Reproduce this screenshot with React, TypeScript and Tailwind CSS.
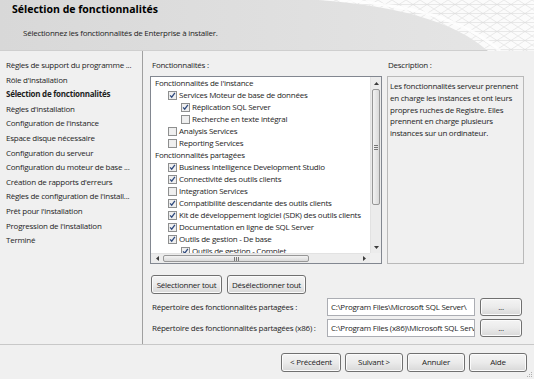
import React from "react";

const steps = [
  "Règles de support du programme ...",
  "Rôle d'installation",
  "Sélection de fonctionnalités",
  "Règles d'installation",
  "Configuration de l'instance",
  "Espace disque nécessaire",
  "Configuration du serveur",
  "Configuration du moteur de base ...",
  "Création de rapports d'erreurs",
  "Règles de configuration de l'install...",
  "Prêt pour l'installation",
  "Progression de l'installation",
  "Terminé",
];

type Feature = { label: string; level: 0 | 1 | 2; checked?: boolean };

const features: Feature[] = [
  { label: "Fonctionnalités de l'instance", level: 0 },
  { label: "Services Moteur de base de données", level: 1, checked: true },
  { label: "Réplication SQL Server", level: 2, checked: true },
  { label: "Recherche en texte intégral", level: 2, checked: false },
  { label: "Analysis Services", level: 1, checked: false },
  { label: "Reporting Services", level: 1, checked: false },
  { label: "Fonctionnalités partagées", level: 0 },
  { label: "Business Intelligence Development Studio", level: 1, checked: true },
  { label: "Connectivité des outils clients", level: 1, checked: true },
  { label: "Integration Services", level: 1, checked: false },
  { label: "Compatibilité descendante des outils clients", level: 1, checked: true },
  { label: "Kit de développement logiciel (SDK) des outils clients", level: 1, checked: true },
  { label: "Documentation en ligne de SQL Server", level: 1, checked: true },
  { label: "Outils de gestion - De base", level: 1, checked: true },
  { label: "Outils de gestion - Complet", level: 2, checked: true },
];

const description = [
  "Les fonctionnalités serveur prennent",
  "en charge les instances et ont leurs",
  "propres ruches de Registre. Elles",
  "prennent en charge plusieurs",
  "instances sur un ordinateur.",
];

function CheckBox({ checked }: { checked?: boolean }) {
  return (
    <svg width="9" height="9" viewBox="0 0 9 9" className="shrink-0">
      <rect x="0.5" y="0.5" width="8" height="8" fill="#f6f6f6" stroke="#8e8f8f" />
      <rect x="1.5" y="1.5" width="6" height="6" fill="#e4e4e4" />
      <rect x="2" y="2" width="5" height="5" fill="#f0f0f0" />
      {checked && (
        <path d="M2.1 4.4 L3.7 6.2 L6.9 1.9" fill="none" stroke="#2f4a7e" strokeWidth="1.3" />
      )}
    </svg>
  );
}

function WinButton({ children, className }: { children: React.ReactNode; className: string }) {
  return (
    <button
      className={
        "flex items-center justify-center whitespace-nowrap rounded-[3px] border border-[#707070] bg-linear-to-b from-[#f4f4f4] via-[#ebebeb] to-[#d8d8d8] text-[8px] text-[#1e1e1e] shadow-[inset_0_0_0_1px_#fbfbfb] " +
        className
      }
    >
      {children}
    </button>
  );
}

function VScroll() {
  return (
    <div className="flex w-[11px] flex-col border-l border-[#e2e2e2] bg-[#ececec]">
      <div className="flex h-[12px] items-center justify-center">
        <svg width="5" height="3" viewBox="0 0 5 3">
          <path d="M0 3 L2.5 0 L5 3 Z" fill="#3c3c3c" />
        </svg>
      </div>
      <div className="mx-[1px] flex h-[116px] items-center justify-center rounded-[2px] border border-[#979797] bg-linear-to-r from-[#f3f3f3] to-[#dadada]">
        <div className="flex flex-col gap-[1px]">
          <div className="h-px w-[4px] bg-[#777]" />
          <div className="h-px w-[4px] bg-[#777]" />
          <div className="h-px w-[4px] bg-[#777]" />
        </div>
      </div>
      <div className="flex-1" />
      <div className="flex h-[12px] items-center justify-center">
        <svg width="5" height="3" viewBox="0 0 5 3">
          <path d="M0 0 L2.5 3 L5 0 Z" fill="#3c3c3c" />
        </svg>
      </div>
    </div>
  );
}

function HScroll() {
  return (
    <div className="flex flex-1 items-stretch border-t border-[#e2e2e2] bg-[#ececec]">
      <div className="flex w-[12px] items-center justify-center">
        <svg width="3" height="5" viewBox="0 0 3 5">
          <path d="M3 0 L0 2.5 L3 5 Z" fill="#3c3c3c" />
        </svg>
      </div>
      <div className="my-[1px] flex w-[146px] items-center justify-center rounded-[2px] border border-[#979797] bg-linear-to-b from-[#f3f3f3] to-[#dadada]">
        <div className="flex gap-[1px]">
          <div className="h-[4px] w-px bg-[#777]" />
          <div className="h-[4px] w-px bg-[#777]" />
          <div className="h-[4px] w-px bg-[#777]" />
        </div>
      </div>
      <div className="flex-1" />
      <div className="flex w-[12px] items-center justify-center">
        <svg width="3" height="5" viewBox="0 0 3 5">
          <path d="M0 0 L3 2.5 L0 5 Z" fill="#3c3c3c" />
        </svg>
      </div>
    </div>
  );
}

function HeaderMesh() {
  return (
    <svg className="absolute inset-0" width="534" height="51" viewBox="0 0 534 51">
      <defs>
        <pattern id="mesh" width="14" height="9" patternUnits="userSpaceOnUse">
          <path d="M0 0 L14 9 M14 0 L0 9 M0 4.5 L14 4.5" stroke="#dcdcdc" strokeWidth="0.6" />
        </pattern>
        <clipPath id="swoosh">
          <path d="M318 0 C 400 6, 455 22, 488 51 L534 51 L534 0 Z" />
        </clipPath>
      </defs>
      <path d="M318 0 C 400 6, 455 22, 488 51 L534 51 L534 0 Z" fill="#ffffff" opacity="0.85" />
      <g clipPath="url(#swoosh)">
        <rect x="300" y="0" width="234" height="51" fill="url(#mesh)" />
      </g>
      <path d="M340 0 C 410 5, 462 18, 500 51" fill="none" stroke="#ffffff" strokeWidth="3" opacity="0.8" />
    </svg>
  );
}

export default function App() {
  return (
    <div className="flex h-[379px] w-[534px] flex-col overflow-hidden bg-[#f0f0f0] font-['Open_Sans','Liberation_Sans',sans-serif] text-[8px] tracking-[-0.25px] text-[#1e1e1e]">
      <div className="relative h-[51px] shrink-0 border-b border-[#cfcfcf] bg-linear-to-r from-[#d8d8d8] to-[#e6e6e6]">
        <HeaderMesh />
        <div className="relative pl-[12px] pt-[2px]">
          <div className="text-[10.5px] font-bold leading-[15px] tracking-normal text-black">
            Sélection de fonctionnalités
          </div>
          <div className="mt-[10px] pl-[11px] text-[8px] leading-[12px]">
            Sélectionnez les fonctionnalités de Enterprise à installer.
          </div>
        </div>
      </div>

      <div className="flex min-h-0 flex-1">
        <div className="w-[143px] shrink-0 border-r border-[#a0a0a0] pl-[6px] pt-[7px]">
          {steps.map((s) => (
            <div
              key={s}
              className={
                "h-[14.6px] whitespace-nowrap leading-[14.6px] " +
                (s === "Sélection de fonctionnalités" ? "font-bold" : "")
              }
            >
              {s}
            </div>
          ))}
        </div>

        <div className="flex flex-1 flex-col pl-[7px] pr-[10px] pt-[8px]">
          <div className="flex gap-[5px]">
            <div className="flex w-[232px] flex-col">
              <div className="h-[12px] pl-[2px] leading-[12px]">Fonctionnalités :</div>
              <div className="mt-[5px] flex h-[188px] flex-col border border-[#828790] bg-white">
                <div className="flex min-h-0 flex-1">
                  <div className="flex-1 overflow-hidden pl-[4px]">
                    {features.map((f) => (
                      <div key={f.label} className="flex h-[12px] items-center gap-[2px] whitespace-nowrap">
                        {f.level === 1 && <div className="w-[11px] shrink-0" />}
                        {f.level === 2 && <div className="w-[24px] shrink-0" />}
                        {f.level > 0 && <CheckBox checked={f.checked} />}
                        <span className="leading-[12px]">{f.label}</span>
                      </div>
                    ))}
                  </div>
                  <VScroll />
                </div>
                <div className="flex h-[10px] shrink-0">
                  <HScroll />
                  <div className="w-[11px] bg-[#f0f0f0]" />
                </div>
              </div>
            </div>
            <div className="flex flex-1 flex-col">
              <div className="h-[12px] pl-[1px] leading-[12px]">Description :</div>
              <div className="mt-[5px] h-[188px] overflow-hidden border border-[#b9b9b9] bg-[#f0f0f0] px-[2px] pt-[3px]">
                {description.map((l) => (
                  <div key={l} className="whitespace-nowrap leading-[11.8px]">
                    {l}
                  </div>
                ))}
              </div>
            </div>
          </div>

          <div className="mt-[11px] flex gap-[5px] pl-[1px]">
            <WinButton className="h-[19px] w-[71px]">Sélectionner tout</WinButton>
            <WinButton className="h-[19px] w-[79px]">Désélectionner tout</WinButton>
          </div>

          <div className="mt-[4px] flex flex-col gap-[3px]">
            <div className="flex h-[18px] items-center">
              <div className="w-[177px] whitespace-nowrap pl-[2px]">Répertoire des fonctionnalités partagées :</div>
              <div className="flex h-[18px] w-[148px] items-center overflow-hidden whitespace-nowrap border border-[#abadb3] bg-white pl-[3px]">
                C:\Program Files\Microsoft SQL Server\
              </div>
              <WinButton className="ml-[5px] h-[18px] w-[42px]">...</WinButton>
            </div>
            <div className="flex h-[18px] items-center">
              <div className="w-[177px] whitespace-nowrap pl-[2px]">Répertoire des fonctionnalités partagées (x86) :</div>
              <div className="flex h-[18px] w-[148px] items-center overflow-hidden whitespace-nowrap border border-[#abadb3] bg-white pl-[3px]">
                C:\Program Files (x86)\Microsoft SQL Server\
              </div>
              <WinButton className="ml-[5px] h-[18px] w-[42px]">...</WinButton>
            </div>
          </div>
        </div>
      </div>

      <div className="relative flex h-[35px] shrink-0 items-center justify-end gap-[4px] border-t border-[#c8c8c8] pr-[7px]">
        <WinButton className="h-[19px] w-[60px]">&lt; Précédent</WinButton>
        <WinButton className="h-[19px] w-[58px]">Suivant &gt;</WinButton>
        <WinButton className="h-[19px] w-[58px]">Annuler</WinButton>
        <WinButton className="h-[19px] w-[58px]">Aide</WinButton>
        <svg className="absolute bottom-[1px] right-[1px]" width="7" height="7" viewBox="0 0 7 7">
          <rect x="5" y="1" width="1" height="1" fill="#b0b0b0" />
          <rect x="3" y="3" width="1" height="1" fill="#b0b0b0" />
          <rect x="5" y="3" width="1" height="1" fill="#b0b0b0" />
          <rect x="1" y="5" width="1" height="1" fill="#b0b0b0" />
          <rect x="3" y="5" width="1" height="1" fill="#b0b0b0" />
          <rect x="5" y="5" width="1" height="1" fill="#b0b0b0" />
        </svg>
      </div>
    </div>
  );
}
